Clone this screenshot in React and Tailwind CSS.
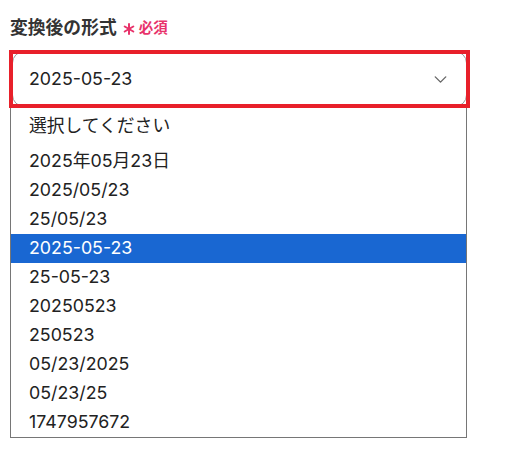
import { ChevronDown } from 'lucide-react';

const options = [
    '2025年05月23日',
    '2025/05/23',
    '25/05/23',
    '2025-05-23',
    '25-05-23',
    '20250523',
    '250523',
    '05/23/2025',
    '05/23/25',
    '1747957672',
];

const selected = '2025-05-23';

const Star = () => (
    <svg width="12" height="12" viewBox="0 0 12 12" className="mr-[4px] translate-y-[1px]">
        <g stroke="currentColor" strokeWidth="2" strokeLinecap="round">
            <line x1="6" y1="1" x2="6" y2="11" />
            <line x1="1.7" y1="3.5" x2="10.3" y2="8.5" />
            <line x1="1.7" y1="8.5" x2="10.3" y2="3.5" />
        </g>
    </svg>
);

export default function App() {
    return (
        <div
            className="w-[513px] h-[454px] bg-white text-[#222] pl-[10px] pt-[15px]"
            style={{ fontFamily: 'Inter, "Noto Sans CJK JP", sans-serif' }}
        >
            <div className="flex items-center h-[26px] gap-[6px]">
                <span className="text-[17.8px] font-bold text-[#333] leading-none">変換後の形式</span>
                <span className="flex items-center text-[#e8336b] font-bold text-[14.5px] leading-none">
                    <Star />
                    必須
                </span>
            </div>

            <div className="relative mt-[10px] w-[457px]">
                <div className="h-[56px] ml-[2px] w-[455px] border border-[#999] rounded-[12px] flex items-center justify-between pl-[16px] pr-[15px]">
                    <span className="text-[17.8px]">{selected}</span>
                    <ChevronDown size={21} strokeWidth={1.6} className="text-[#666]" />
                </div>
                <div className="absolute -left-[1px] -top-[1px] w-[461px] h-[58px] border-4 border-[#e8202a] pointer-events-none" />
            </div>

            <div className="w-[457px] border-x border-b border-[#767676] pt-[1px]">
                <div className="h-[39px] flex items-center pl-[18px] text-[17.8px] pb-[3px]">選択してください</div>
                {options.map((o) => (
                    <div
                        key={o}
                        className={
                            o === selected
                                ? 'h-[29px] flex items-center pl-[18px] text-[17.8px] bg-[#1967d2] text-white'
                                : 'h-[29px] flex items-center pl-[18px] text-[17.8px]'
                        }
                    >
                        {o}
                    </div>
                ))}
            </div>
        </div>
    );
}
